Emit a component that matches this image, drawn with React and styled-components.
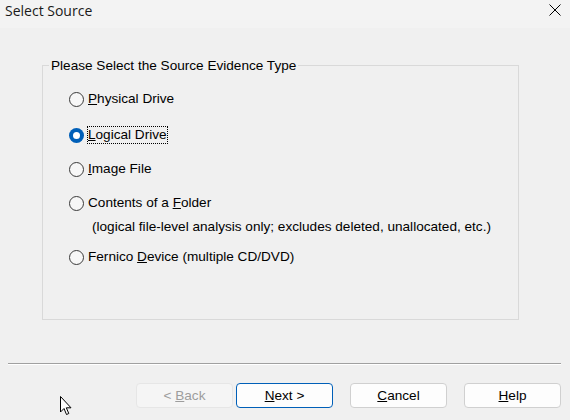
import React from "react"
import styled, { createGlobalStyle } from "styled-components"

const GlobalStyle = createGlobalStyle`
  html, body {
    margin: 0;
    padding: 0;
    background: #f0f0f0;
  }
  * {
    box-sizing: border-box;
  }
`

const Window = styled.div`
  position: relative;
  width: 570px;
  height: 420px;
  overflow: hidden;
  display: flex;
  flex-direction: column;
  background: #f0f0f0;
  font-family: "Liberation Sans", Arial, sans-serif;
  font-size: 13.6px;
  color: #000;
`

const TitleBar = styled.div`
  height: 28px;
  flex: none;
  display: flex;
  align-items: flex-start;
  justify-content: space-between;
  padding: 2px 9px 0 5px;
  background: #f3f3f3;
`

const Title = styled.span`
  font-family: "Segoe UI", "Open Sans", sans-serif;
  font-size: 14px;
  line-height: 18px;
  color: #1a1a1a;
`

const CloseButton = styled.svg`
  margin-top: 2px;
  width: 12px;
  height: 12px;
`

const GroupBox = styled.fieldset`
  margin: 30px 0 0 42px;
  padding: 0;
  width: 477px;
  height: 262px;
  min-inline-size: 0;
  border: 1px solid #d9d9d9;
`

const Legend = styled.legend`
  margin-left: 6px;
  padding: 0 2px;
  line-height: 15px;
`

const OptionList = styled.div`
  padding: 17px 0 0 26px;
  display: flex;
  flex-direction: column;
  gap: 16px;
`

const Option = styled.div`
  display: flex;
  flex-direction: column;
  margin-top: ${(p) => (p.$checked ? "2px" : "0")};
`

const OptionRow = styled.label`
  display: flex;
  align-items: center;
  height: 18px;
  gap: 3px;
`

const RadioDot = styled.span`
  width: 15px;
  height: 15px;
  flex: none;
  border-radius: 50%;
  display: flex;
  align-items: center;
  justify-content: center;
  border: ${(p) => (p.$checked ? "none" : "1px solid #3a3a3a")};
  background: ${(p) => (p.$checked ? "#005fb8" : "#f7f7f7")};

  &::after {
    content: "";
    display: ${(p) => (p.$checked ? "block" : "none")};
    width: 7px;
    height: 7px;
    border-radius: 50%;
    background: #fff;
  }
`

const OptionText = styled.span`
  line-height: 18px;
  padding: 0 1px;
  outline: ${(p) => (p.$focused ? "1px dotted #000" : "none")};
  outline-offset: -1px;
`

const Note = styled.div`
  margin: 6px 0 -4px 23px;
  line-height: 18px;
`

const Separator = styled.div`
  margin: 43px 9px 0 8px;
  border-top: 1px solid #a0a0a0;
  border-bottom: 1px solid #ffffff;
`

const ButtonRow = styled.div`
  margin-top: 18px;
  padding-right: 9px;
  display: flex;
  justify-content: flex-end;
  gap: 17px;
`

const WizardNav = styled.div`
  display: flex;
  gap: 3px;
`

const Button = styled.button`
  width: 97px;
  height: 25px;
  padding: 0;
  font-family: "Liberation Sans", Arial, sans-serif;
  font-size: 13.6px;
  color: ${(p) => (p.disabled ? "#9d9d9d" : "#000")};
  background: ${(p) => (p.disabled ? "#f5f5f5" : "#fdfdfd")};
  border: 1px solid
    ${(p) => (p.disabled ? "#e6e6e6" : p.$default ? "#005fb8" : "#d0d0d0")};
  border-radius: 4px;
`

const Cursor = styled.svg`
  position: absolute;
  left: 60px;
  top: 396px;
  width: 13px;
  height: 20px;
`

const options = [
  { key: "physical", label: <><u>P</u>hysical Drive</> },
  { key: "logical", label: <><u>L</u>ogical Drive</>, checked: true },
  { key: "image", label: <><u>I</u>mage File</> },
  {
    key: "folder",
    label: <>Contents of a <u>F</u>older</>,
    note: "(logical file-level analysis only; excludes deleted, unallocated, etc.)",
  },
  { key: "fernico", label: <>Fernico <u>D</u>evice (multiple CD/DVD)</> },
]

const App = () => {
  return (
    <Window>
      <GlobalStyle />
      <TitleBar>
        <Title>Select Source</Title>
        <CloseButton viewBox="0 0 12 12">
          <path d="M0.5 0.5 L11.5 11.5 M11.5 0.5 L0.5 11.5" stroke="#000" strokeWidth="1" fill="none" />
        </CloseButton>
      </TitleBar>

      <GroupBox>
        <Legend>Please Select the Source Evidence Type</Legend>
        <OptionList>
          {options.map((o) => (
            <Option key={o.key} $checked={o.checked}>
              <OptionRow>
                <RadioDot $checked={o.checked} />
                <OptionText $focused={o.checked}>{o.label}</OptionText>
              </OptionRow>
              {o.note ? <Note>{o.note}</Note> : null}
            </Option>
          ))}
        </OptionList>
      </GroupBox>

      <Separator />

      <ButtonRow>
        <WizardNav>
          <Button disabled>&lt; <u>B</u>ack</Button>
          <Button $default><u>N</u>ext &gt;</Button>
        </WizardNav>
        <Button><u>C</u>ancel</Button>
        <Button><u>H</u>elp</Button>
      </ButtonRow>

      <Cursor viewBox="0 0 13 20">
        <path
          d="M0.5 0.5 L0.5 16 L4 12.5 L6.5 18.5 L8.8 17.5 L6.3 11.8 L11 11.8 Z"
          fill="#fff"
          stroke="#000"
          strokeWidth="1"
          strokeLinejoin="miter"
        />
      </Cursor>
    </Window>
  )
}

export default App
